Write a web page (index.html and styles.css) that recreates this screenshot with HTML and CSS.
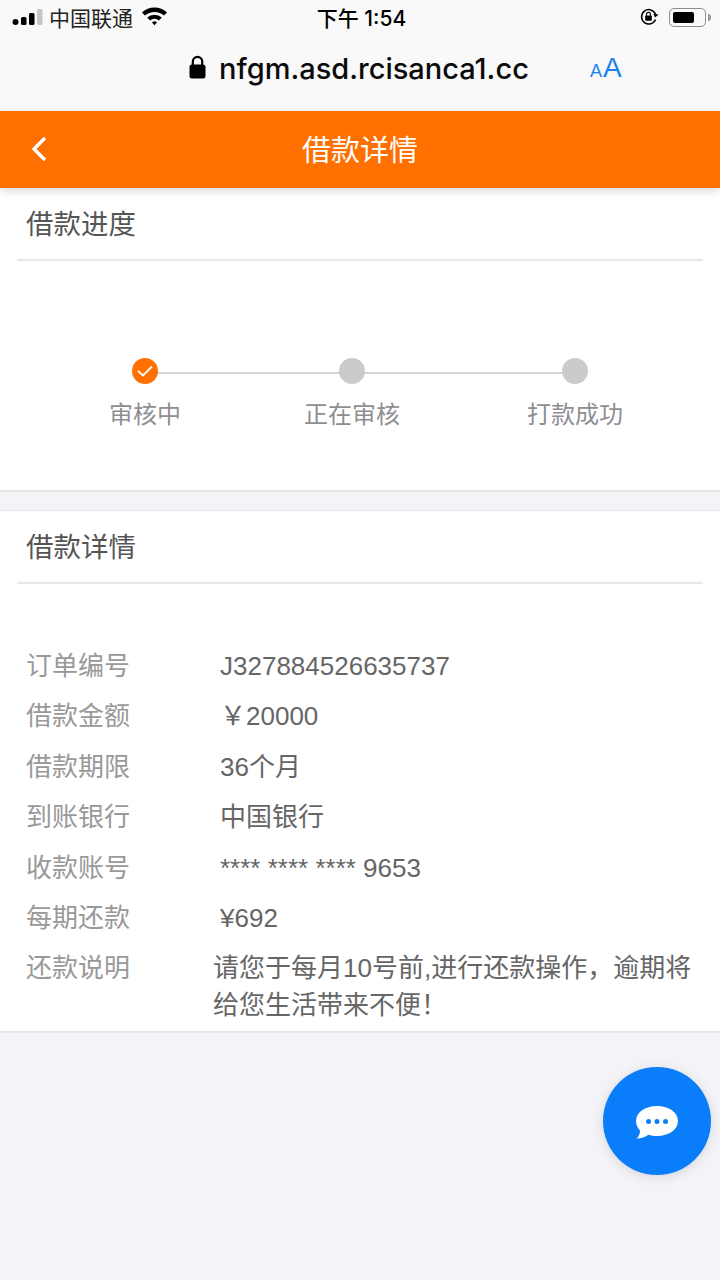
FILE: index.html
```html
<!DOCTYPE html>
<html lang="zh-CN">
<head>
<meta charset="UTF-8" />
<meta name="viewport" content="width=device-width, initial-scale=1" />
<title>借款详情</title>
<link rel="stylesheet" href="styles.css">
</head>
<body>
  <div class="browser-top">
    <div class="status-bar">
      <div class="status-left">
        <svg class="signal" width="31" height="18" viewBox="0 0 31 18">
          <circle cx="3.5" cy="14" r="3" fill="#000" />
          <rect x="9" y="9" width="5.5" height="8" rx="1.5" fill="#000" />
          <rect x="17" y="5" width="5.5" height="12" rx="1.5" fill="#000" />
          <rect x="25" y="1" width="5.5" height="16" rx="1.5" fill="#c6c6c8" />
        </svg>
        <span class="carrier">中国联通</span>
        <svg class="wifi" width="27" height="20" viewBox="0 0 27 20">
          <path d="M1 6.5 A18 18 0 0 1 26 6.5 L23 9.6 A14 14 0 0 0 4 9.6 Z" fill="#000" />
          <path d="M6.2 11.6 A10.5 10.5 0 0 1 20.8 11.6 L17.9 14.5 A6.5 6.5 0 0 0 9.1 14.5 Z" fill="#000" />
          <path d="M11 16.4 A3.6 3.6 0 0 1 16 16.4 L13.5 19.2 Z" fill="#000" />
        </svg>
      </div>
      <div class="clock">下午 1:54</div>
      <div class="status-right">
        <svg width="19" height="18" viewBox="0 0 19 18">
          <path d="M15.5 11.5 A7.2 7.2 0 1 1 15.5 6.2" fill="none" stroke="#000" stroke-width="1.5" />
          <path d="M15 9.5 L18.6 6.6 L13.4 5.8 Z" fill="#000" />
          <rect x="5.2" y="7.6" width="6.6" height="5.2" rx="0.8" fill="#000" />
          <path d="M6.5 7.8 V6.4 A2 2 0 0 1 10.5 6.4 V7.8" fill="none" stroke="#000" stroke-width="1.1" />
        </svg>
        <div class="battery"><div class="battery-level"></div></div>
        <div class="battery-tip"></div>
      </div>
    </div>
    <div class="url-bar">
      <svg class="lock" width="17" height="24" viewBox="0 0 17 24">
        <rect x="0.5" y="9.5" width="16" height="14" rx="2.5" fill="#000" />
        <path d="M3.8 10 V6.5 A4.7 4.7 0 0 1 13.2 6.5 V10" fill="none" stroke="#000" stroke-width="2.2" />
      </svg>
      <span class="url">nfgm.asd.rcisanca1.cc</span>
      <span class="text-size"><span class="small-a">A</span><span class="big-a">A</span></span>
    </div>
  </div>

  <header class="page-header">
    <svg class="back" width="18" height="26" viewBox="0 0 18 26">
      <path d="M15 2 L4 13 L15 24" fill="none" stroke="#fff" stroke-width="3.4" />
    </svg>
    <h1>借款详情</h1>
  </header>

  <section class="panel">
    <h2 class="panel-title">借款进度</h2>
    <div class="steps">
      <div class="steps-line"></div>
      <div class="step step-first">
        <div class="dot dot-active">
          <svg width="18" height="14" viewBox="0 0 18 14">
            <path d="M2 7 L7 11.5 L16 2.5" fill="none" stroke="#fff" stroke-width="1.8" />
          </svg>
        </div>
        <span>审核中</span>
      </div>
      <div class="step step-second">
        <div class="dot"></div>
        <span>正在审核</span>
      </div>
      <div class="step step-third">
        <div class="dot"></div>
        <span>打款成功</span>
      </div>
    </div>
  </section>

  <section class="panel panel-details">
    <h2 class="panel-title">借款详情</h2>
    <div class="rows">
      <div class="row"><span class="row-label">订单编号</span><span class="row-value">J327884526635737</span></div>
      <div class="row"><span class="row-label">借款金额</span><span class="row-value">￥20000</span></div>
      <div class="row"><span class="row-label">借款期限</span><span class="row-value">36个月</span></div>
      <div class="row"><span class="row-label">到账银行</span><span class="row-value">中国银行</span></div>
      <div class="row"><span class="row-label">收款账号</span><span class="row-value">**** **** **** 9653</span></div>
      <div class="row"><span class="row-label">每期还款</span><span class="row-value">¥692</span></div>
      <div class="row row-note"><span class="row-label">还款说明</span><span class="row-value">请您于每月10号前,进行还款操作，逾期将给您生活带来不便！</span></div>
    </div>
  </section>

  <div class="chat-button">
    <svg class="chat-icon" width="44" height="38" viewBox="0 0 44 38">
      <path d="M22 1 C34 1 43 7.5 43 16 C43 24.5 34 31 22 31 C19 31 16 30.6 13.5 29.8 C10.5 32 6 33.6 1.5 33.8 C4 31.5 5 28.5 5 25.5 C2.5 22.8 1 19.6 1 16 C1 7.5 10 1 22 1 Z" fill="#fff" />
      <circle cx="13.5" cy="16.5" r="2.5" fill="#0a7dfa" />
      <circle cx="22" cy="16.5" r="2.5" fill="#0a7dfa" />
      <circle cx="30.5" cy="16.5" r="2.5" fill="#0a7dfa" />
    </svg>
  </div>
</body>
</html>
```

FILE: styles.css
```css
* {
  box-sizing: border-box;
}
body {
  margin: 0;
  width: 720px;
  height: 1280px;
  position: relative;
  overflow: hidden;
  background: #f3f3f8;
  font-family: "Liberation Sans", "Noto Sans CJK SC", sans-serif;
}

/* Browser chrome */
.browser-top {
  height: 111px;
  background: #f9f9fa;
}
.status-bar {
  height: 36px;
  padding: 0 9px 2px 12px;
  display: grid;
  grid-template-columns: 1fr auto 1fr;
  align-items: center;
  color: #000;
}
.status-left {
  display: flex;
  align-items: center;
}
.carrier {
  margin-left: 6px;
  font-size: 21px;
  color: #222;
}
.wifi {
  margin-left: 8px;
  margin-top: -2px;
}
.clock {
  font-family: "Inter", "Noto Sans CJK SC", sans-serif;
  font-size: 21px;
  font-weight: 500;
}
.status-right {
  display: flex;
  align-items: center;
  justify-content: flex-end;
}
.battery {
  margin-left: 10px;
  width: 37px;
  height: 19px;
  padding: 3px;
  border: 1.5px solid #8e8e8e;
  border-radius: 5px;
}
.battery-level {
  width: 21px;
  height: 100%;
  background: #000;
  border-radius: 2px;
}
.battery-tip {
  margin-left: 2px;
  width: 3px;
  height: 7px;
  background: #9a9a9a;
  border-radius: 0 3px 3px 0;
}
.url-bar {
  height: 75px;
  padding: 0 0 11px 189px;
  display: flex;
  align-items: center;
}
.lock {
  margin-top: -2px;
}
.url {
  margin-left: 13px;
  font-family: "Inter", sans-serif;
  font-size: 29px;
  font-weight: 500;
  color: #0b0b0b;
}
.text-size {
  margin-left: 61px;
  color: #1a82f0;
  display: flex;
  align-items: baseline;
}
.small-a {
  font-size: 18px;
}
.big-a {
  font-size: 28px;
  margin-left: 1px;
}

/* Orange title bar */
.page-header {
  height: 77px;
  padding-bottom: 4px;
  background: #ff7000;
  position: relative;
  z-index: 1;
  box-shadow: 0 3px 8px rgba(0, 0, 0, 0.14);
  display: flex;
  align-items: center;
  justify-content: center;
}
.page-header h1 {
  margin: 0;
  font-size: 29px;
  font-weight: 400;
  color: #fff;
}
.back {
  position: absolute;
  left: 30px;
  top: 25px;
}

/* White panels */
.panel {
  background: #fff;
  height: 304px;
  border-bottom: 2px solid #e6e6e6;
}
.panel-details {
  margin-top: 18px;
  height: 523px;
  border-top: 1px solid #e6e6e6;
}
.panel-title {
  margin: 0 17px;
  height: 73px;
  padding: 0 9px 4px;
  border-bottom: 2px solid #e8e8e8;
  display: flex;
  align-items: center;
  font-size: 27.5px;
  font-weight: 400;
  color: #555;
}

/* Progress */
.steps {
  position: relative;
  padding: 97px 0 0 109px;
  display: flex;
}
.steps-line {
  position: absolute;
  left: 150px;
  top: 111px;
  width: 420px;
  height: 2px;
  background: #d4d4d4;
}
.step {
  position: relative;
  width: 72px;
  display: flex;
  flex-direction: column;
  align-items: center;
  font-size: 24px;
  color: #8e8e93;
  white-space: nowrap;
}
.step-second {
  margin-left: 123px;
  width: 96px;
}
.step-third {
  margin-left: 127px;
  width: 96px;
}
.step span {
  margin-top: 11px;
}
.dot {
  width: 26px;
  height: 26px;
  border-radius: 50%;
  background: #cbcbcb;
}
.dot-active {
  background: #ff7000;
  display: flex;
  align-items: center;
  justify-content: center;
}

/* Detail rows */
.rows {
  padding: 57px 0 0 26px;
  font-size: 26px;
}
.row {
  display: flex;
  line-height: 50.4px;
}
.row-label {
  width: 194px;
  flex: none;
  color: #999;
}
.row-value {
  color: #666;
}
.row-note .row-value {
  margin-left: -7px;
  width: 485px;
  line-height: 37px;
  padding-top: 7px;
}

/* Floating chat */
.chat-button {
  position: absolute;
  left: 603px;
  top: 1067px;
  width: 108px;
  height: 108px;
  border-radius: 50%;
  background: #0a7dfa;
  box-shadow: 0 2px 12px rgba(0, 0, 0, 0.12);
  display: flex;
  align-items: center;
  justify-content: center;
}
.chat-icon {
  margin-top: 5px;
}
```
